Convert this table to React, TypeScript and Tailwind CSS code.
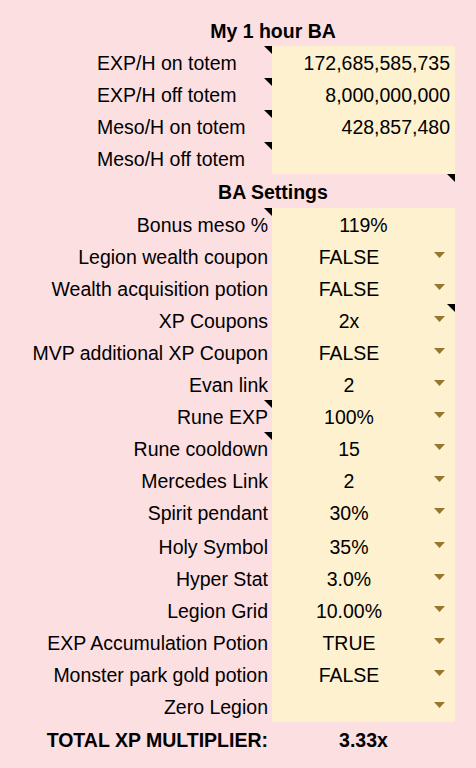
import React from 'react';

type Setting = {
  label: string;
  value: string;
  dropdown: boolean;
  tall?: boolean;
  labelNote?: boolean;
  valueNote?: boolean;
};

const totals = [
  { label: 'EXP/H on totem', value: '172,685,585,735' },
  { label: 'EXP/H off totem', value: '8,000,000,000' },
  { label: 'Meso/H on totem', value: '428,857,480' },
  { label: 'Meso/H off totem', value: '' },
];

const settings: Setting[] = [
  { label: 'Bonus meso %', value: '119%', dropdown: false, labelNote: true },
  { label: 'Legion wealth coupon', value: 'FALSE', dropdown: true },
  { label: 'Wealth acquisition potion', value: 'FALSE', dropdown: true },
  { label: 'XP Coupons', value: '2x', dropdown: true, valueNote: true },
  { label: 'MVP additional XP Coupon', value: 'FALSE', dropdown: true },
  { label: 'Evan link', value: '2', dropdown: true },
  { label: 'Rune EXP', value: '100%', dropdown: true, labelNote: true },
  { label: 'Rune cooldown', value: '15', dropdown: true, labelNote: true },
  { label: 'Mercedes Link', value: '2', dropdown: true },
  { label: 'Spirit pendant', value: '30%', dropdown: true },
  { label: 'Holy Symbol', value: '35%', dropdown: true, tall: true },
  { label: 'Hyper Stat', value: '3.0%', dropdown: true },
  { label: 'Legion Grid', value: '10.00%', dropdown: true },
  { label: 'EXP Accumulation Potion', value: 'TRUE', dropdown: true },
  { label: 'Monster park gold potion', value: 'FALSE', dropdown: true },
  { label: 'Zero Legion', value: '', dropdown: true },
];

// little black comment marker in the top-right corner of a cell
const Note = () => (
  <svg className="absolute top-0 right-0" width="8" height="8" viewBox="0 0 8 8">
    <polygon points="0,0 8,0 8,8" fill="#000" />
  </svg>
);

const Arrow = () => (
  <svg width="11" height="6" viewBox="0 0 11 6">
    <polygon points="0,0 11,0 5.5,6" fill="#957730" />
  </svg>
);

export default function App() {
  return (
    <div
      className="w-[476px] h-[768px] bg-[#fcdfe0] text-black text-[19.5px] leading-none pt-[14px]"
      style={{ fontFamily: '"Liberation Sans", Arial, sans-serif' }}
    >
      {/* My 1 hour BA */}
      <div className="h-[32px] flex items-center justify-center pl-[70px] pt-[3px] font-bold">
        My 1 hour BA
      </div>
      {totals.map((row) => (
        <div key={row.label} className="grid grid-cols-[272px_183px] h-[32px]">
          <div className="relative flex items-center pl-[97px] pt-[3px]">
            {row.label}
            <Note />
          </div>
          <div className="bg-[#fdf1d0] flex items-center justify-end pr-[5px] pt-[3px]">{row.value}</div>
        </div>
      ))}

      {/* BA Settings */}
      <div className="relative h-[34px] flex items-center justify-center pl-[70px] pt-[3px] font-bold">
        BA Settings
        <span className="absolute top-0 left-[272px] w-[183px] h-[10px]">
          <Note />
        </span>
      </div>

      {settings.map((row) => (
        <div key={row.label} className={`grid grid-cols-[272px_183px] ${row.tall ? 'h-[34px]' : 'h-[32px]'}`}>
          <div className={`relative flex items-center justify-end pr-[4px] ${row.tall ? 'pt-[5px]' : 'pt-[3px]'}`}>
            {row.label}
            {row.labelNote && <Note />}
          </div>
          <div className={`relative bg-[#fdf1d0] flex items-center ${row.tall ? 'pt-[5px]' : 'pt-[3px]'}`}>
            <span className="flex-1 text-center">{row.value}</span>
            {row.dropdown && (
              <span className="w-[29px] flex pl-[8px] -mt-[6px]">
                <Arrow />
              </span>
            )}
            {row.valueNote && <Note />}
          </div>
        </div>
      ))}

      {/* total */}
      <div className="grid grid-cols-[272px_183px] h-[34px] font-bold">
        <div className="flex items-center justify-end pr-[4px] pt-[3px]">TOTAL XP MULTIPLIER:</div>
        <div className="flex items-center justify-center pt-[3px]">3.33x</div>
      </div>
    </div>
  );
}
